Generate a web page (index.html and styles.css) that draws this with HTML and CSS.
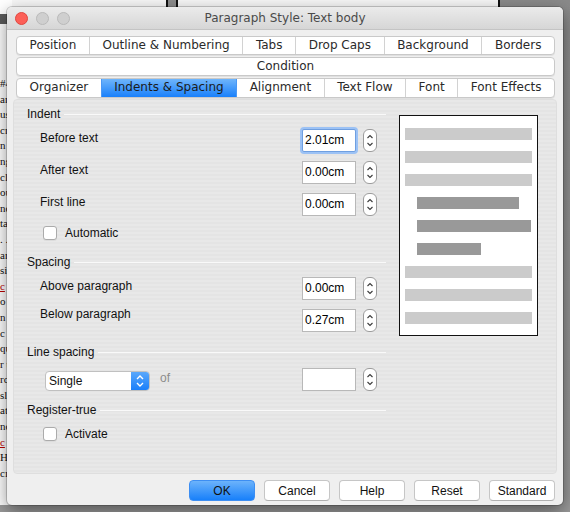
FILE: index.html
```html
<!DOCTYPE html>
<html lang="en">
<head>
    <meta charset="UTF-8">
    <meta name="viewport" content="width=device-width, initial-scale=1.0">
    <title>Paragraph Style</title>
    <link rel="stylesheet" href="styles.css">
</head>
<body>
    <!-- things behind the dialog -->
    <div class="desk-top"></div>
    <div class="desk-handle"></div>
    <div class="desk-doc">
        <div class="doc-bar"></div>
        <p>#4</p><p>ar</p><p>us</p><p>cr</p><p>n</p><p>ng</p><p>cl</p>
        <p>ou</p><p>nc</p><p>ta</p><p>. .</p><p>ar</p><p>si</p><p class="red">c</p>
        <p>o t</p><p>n</p><p>c l</p><p>qu</p><p>r t</p><p>rc</p><p>sl</p>
        <p>att</p><p>nc</p><p class="red">c</p><p>Ha</p><p>cı</p>
    </div>

    <div class="window">
        <div class="titlebar">
            <div class="lights">
                <span class="light close"></span>
                <span class="light"></span>
                <span class="light"></span>
            </div>
            <div class="title">Paragraph Style: Text body</div>
        </div>

        <div class="tabs">
            <div class="tab-row">
                <div class="tab">Position</div>
                <div class="tab">Outline &amp; Numbering</div>
                <div class="tab">Tabs</div>
                <div class="tab">Drop Caps</div>
                <div class="tab">Background</div>
                <div class="tab">Borders</div>
            </div>
            <div class="tab-row">
                <div class="tab">Condition</div>
            </div>
            <div class="tab-row">
                <div class="tab">Organizer</div>
                <div class="tab active">Indents &amp; Spacing</div>
                <div class="tab after-active">Alignment</div>
                <div class="tab">Text Flow</div>
                <div class="tab">Font</div>
                <div class="tab">Font Effects</div>
            </div>
        </div>

        <div class="panel">
            <div class="settings">
                <div class="heading">Indent</div>
                <div class="row first">
                    <span class="label">Before text</span>
                    <div class="field focus">2.01cm</div>
                    <svg class="spin" viewBox="0 0 14 23"><rect x="0.5" y="0.5" width="13" height="22" rx="5.5" fill="#fff" stroke="#9c9c9c"/><path d="M4.5 9 L7 6.5 L9.5 9 M4.5 14 L7 16.5 L9.5 14" fill="none" stroke="#3a3a3a" stroke-width="1.1"/></svg>
                </div>
                <div class="row">
                    <span class="label">After text</span>
                    <div class="field">0.00cm</div>
                    <svg class="spin" viewBox="0 0 14 23"><rect x="0.5" y="0.5" width="13" height="22" rx="5.5" fill="#fff" stroke="#9c9c9c"/><path d="M4.5 9 L7 6.5 L9.5 9 M4.5 14 L7 16.5 L9.5 14" fill="none" stroke="#3a3a3a" stroke-width="1.1"/></svg>
                </div>
                <div class="row">
                    <span class="label">First line</span>
                    <div class="field">0.00cm</div>
                    <svg class="spin" viewBox="0 0 14 23"><rect x="0.5" y="0.5" width="13" height="22" rx="5.5" fill="#fff" stroke="#9c9c9c"/><path d="M4.5 9 L7 6.5 L9.5 9 M4.5 14 L7 16.5 L9.5 14" fill="none" stroke="#3a3a3a" stroke-width="1.1"/></svg>
                </div>
                <div class="check">
                    <span class="box"></span>
                    <span>Automatic</span>
                </div>

                <div class="heading">Spacing</div>
                <div class="row first">
                    <span class="label">Above paragraph</span>
                    <div class="field">0.00cm</div>
                    <svg class="spin" viewBox="0 0 14 23"><rect x="0.5" y="0.5" width="13" height="22" rx="5.5" fill="#fff" stroke="#9c9c9c"/><path d="M4.5 9 L7 6.5 L9.5 9 M4.5 14 L7 16.5 L9.5 14" fill="none" stroke="#3a3a3a" stroke-width="1.1"/></svg>
                </div>
                <div class="row">
                    <span class="label up">Below paragraph</span>
                    <div class="field">0.27cm</div>
                    <svg class="spin" viewBox="0 0 14 23"><rect x="0.5" y="0.5" width="13" height="22" rx="5.5" fill="#fff" stroke="#9c9c9c"/><path d="M4.5 9 L7 6.5 L9.5 9 M4.5 14 L7 16.5 L9.5 14" fill="none" stroke="#3a3a3a" stroke-width="1.1"/></svg>
                </div>

                <div class="heading">Line spacing</div>
                <div class="row first">
                    <div class="select-wrap">
                        <div class="select">
                            <span class="select-text">Single</span>
                            <span class="select-arrows">
                                <svg viewBox="0 0 18 20" width="18" height="20"><path d="M6 8 L9 5 L12 8 M6 12 L9 15 L12 12" fill="none" stroke="#fff" stroke-width="1.4"/></svg>
                            </span>
                        </div>
                        <span class="of">of</span>
                    </div>
                    <div class="field"></div>
                    <svg class="spin" viewBox="0 0 14 23"><rect x="0.5" y="0.5" width="13" height="22" rx="5.5" fill="#fff" stroke="#9c9c9c"/><path d="M4.5 9 L7 6.5 L9.5 9 M4.5 14 L7 16.5 L9.5 14" fill="none" stroke="#3a3a3a" stroke-width="1.1"/></svg>
                </div>

                <div class="heading">Register-true</div>
                <div class="check">
                    <span class="box"></span>
                    <span>Activate</span>
                </div>
            </div>

            <div class="preview">
                <div class="bar"></div>
                <div class="bar"></div>
                <div class="bar"></div>
                <div class="bar dark" style="width: 102px"></div>
                <div class="bar dark" style="width: 114px"></div>
                <div class="bar dark" style="width: 64px"></div>
                <div class="bar"></div>
                <div class="bar"></div>
                <div class="bar"></div>
            </div>
        </div>

        <div class="footer">
            <button class="btn default">OK</button>
            <button class="btn">Cancel</button>
            <button class="btn">Help</button>
            <button class="btn">Reset</button>
            <button class="btn">Standard</button>
        </div>
    </div>
</body>
</html>
```

FILE: styles.css
```css
body {
    margin: 0;
    width: 570px;
    height: 512px;
    overflow: hidden;
    position: relative;
    background: linear-gradient(#8a8a8a, #9a9a9a);
    font-family: "Liberation Sans", Arial, sans-serif;
    font-size: 12px;
    color: #111;
}

/* desktop behind the dialog */
.desk-top {
    position: absolute;
    left: 0;
    top: 0;
    width: 498px;
    height: 12px;
    background: #f7f7f7;
    border-right: 2px solid #111;
}
.desk-handle {
    position: absolute;
    left: 166px;
    top: 0;
    width: 8px;
    height: 8px;
    background: #8c8c8c;
    border-left: 2px solid #111;
    border-right: 2px solid #111;
}
.desk-doc {
    position: absolute;
    left: 0;
    top: 0;
    width: 12px;
    height: 505px;
    background: #fff;
    overflow: hidden;
    font-family: "Liberation Serif", serif;
    font-size: 11px;
    padding-top: 76px;
    box-sizing: border-box;
}
.doc-bar {
    position: absolute;
    left: 0;
    top: 14px;
    width: 12px;
    height: 10px;
    background: #5a5a5a;
}
.desk-doc p {
    margin: 0;
    height: 15.6px;
    line-height: 15.6px;
    white-space: nowrap;
}
.desk-doc .red {
    color: #b00;
    text-decoration: underline;
}

/* dialog */
.window {
    position: absolute;
    left: 7px;
    top: 7px;
    width: 556px;
    height: 498px;
    background: #efefef;
    border-radius: 5px;
    box-shadow: 0 0 0 1px rgba(0, 0, 0, 0.18), 0 6px 18px rgba(0, 0, 0, 0.45);
    display: flex;
    flex-direction: column;
    overflow: hidden;
}
.titlebar {
    height: 22px;
    flex: none;
    display: flex;
    align-items: center;
    background: linear-gradient(#ebebeb, #d6d6d6);
    border-bottom: 1px solid #c4c4c4;
    position: relative;
}
.lights {
    display: flex;
    gap: 8px;
    padding-left: 8px;
}
.light {
    width: 11px;
    height: 11px;
    border-radius: 50%;
    background: #cfcfcf;
    border: 0.5px solid #b9b9b9;
}
.light.close {
    background: #fc5f57;
    border-color: #df463f;
}
.title {
    position: absolute;
    left: 0;
    right: 0;
    text-align: center;
    font-family: "DejaVu Sans", sans-serif;
    font-size: 12px;
    color: #4a4a4a;
}

.tabs {
    margin: 6px 8px 0 9px;
    display: flex;
    flex-direction: column;
    gap: 2px;
}
.tab-row {
    height: 19px;
    display: flex;
    background: #fff;
    border: 1px solid #c9c9c9;
    border-radius: 4px;
    box-sizing: border-box;
    box-shadow: 0 1px 0 rgba(0, 0, 0, 0.06);
    overflow: hidden;
    font-family: "DejaVu Sans", sans-serif;
    font-size: 12px;
    color: #2a2a2a;
}
.tab-row:last-child {
    height: 20px;
}
.tab {
    flex: 1 1 auto;
    text-align: center;
    line-height: 17px;
    border-left: 1px solid #d2d2d2;
    white-space: nowrap;
}
.tab:first-child {
    border-left: none;
}
.tab.active {
    background: linear-gradient(#6fb5fb, #1980fb);
    border-left-color: #4a98f5;
    color: #1c1c1c;
}
.tab.after-active {
    border-left-color: #4a98f5;
}

.panel {
    margin: 1px 6px 0 6px;
    height: 375px;
    box-sizing: border-box;
    border: 1px solid #dedede;
    border-radius: 4px;
    background: repeating-linear-gradient(#e8e8e8 0 2px, #e4e4e4 2px 4px);
    display: flex;
    gap: 13px;
    padding: 6px 18px 0 13px;
}
.settings {
    width: 359px;
    display: flex;
    flex-direction: column;
}
.heading {
    height: 16px;
    display: flex;
    align-items: center;
    gap: 4px;
    margin-top: 12px;
}
.heading:first-child {
    margin-top: 0;
}
.heading::after {
    content: "";
    flex: 1;
    height: 1px;
    background: #f9f9f9;
}
.row {
    display: grid;
    grid-template-columns: 268px 54px 13px;
    column-gap: 7px;
    align-items: center;
    height: 23px;
    margin-top: 9px;
}
.row.first {
    margin-top: 7px;
}
.label {
    padding-left: 13px;
    align-self: start;
    line-height: 15px;
    margin-top: 2px;
}
.label.up {
    margin-top: -2px;
}
.field {
    height: 23px;
    box-sizing: border-box;
    border: 1px solid #b8b8b8;
    background: #fff;
    padding-left: 2px;
    line-height: 21px;
    color: #000;
}
.field.focus {
    border-color: #6f9fe0;
    box-shadow: 0 0 0 2px #9cc2f5;
    border-radius: 2px;
}
.spin {
    width: 14px;
    height: 23px;
}
.check {
    display: flex;
    align-items: center;
    gap: 8px;
    height: 18px;
    margin-top: 8px;
    padding-left: 16px;
}
.row + .heading {
    margin-top: 12px;
}
.check + .heading {
    margin-top: 12px;
}
.heading + .check {
    margin-top: 7px;
}
.box {
    width: 12px;
    height: 12px;
    border: 1px solid #ababab;
    border-radius: 3px;
    background: #fff;
    box-shadow: 0 1px 0 rgba(0, 0, 0, 0.05);
}
.select-wrap {
    display: flex;
    align-items: center;
    padding-left: 18px;
    gap: 10px;
}
.select {
    width: 105px;
    height: 20px;
    margin-top: 4px;
    box-sizing: border-box;
    border: 1px solid #c0c0c0;
    border-radius: 4px;
    background: #fff;
    display: flex;
    overflow: hidden;
}
.select-text {
    flex: 1;
    padding-left: 3px;
    line-height: 18px;
}
.select-arrows {
    width: 18px;
    background: linear-gradient(#5aa8fb, #1a7ffa);
    display: flex;
    align-items: center;
}
.of {
    color: #8c8c8c;
    margin-bottom: 2px;
}

.preview {
    width: 139px;
    height: 221px;
    margin-top: 9px;
    box-sizing: border-box;
    border: 1px solid #111;
    background: #fff;
    display: flex;
    flex-direction: column;
    gap: 11px;
    padding: 12px 0 0 5px;
}
.bar {
    width: 127px;
    height: 12px;
    background: #cbcbcb;
    flex: none;
}
.bar.dark {
    background: #999;
    margin-left: 12px;
}

.footer {
    display: flex;
    justify-content: flex-end;
    gap: 9px;
    margin-top: 6px;
    padding-right: 8px;
}
.btn {
    width: 66px;
    height: 21px;
    font-family: "Liberation Sans", Arial, sans-serif;
    font-size: 12px;
    color: #111;
    background: #fff;
    border: 1px solid #c6c6c6;
    border-bottom-color: #b0b0b0;
    border-radius: 4px;
    padding: 0;
}
.btn.default {
    background: linear-gradient(#6cb3fb, #1880fa);
    border-color: #3d8ef2;
}
```
